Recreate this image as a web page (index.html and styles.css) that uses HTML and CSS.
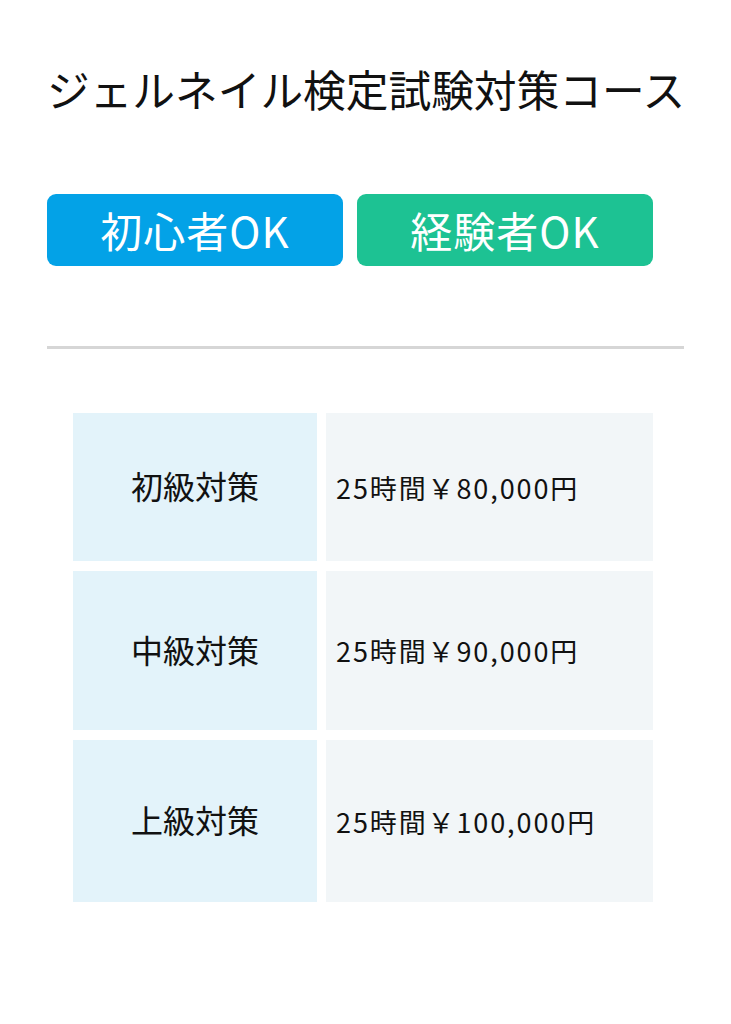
FILE: index.html
```html
<!DOCTYPE html>
<html lang="ja">
<head>
<meta charset="utf-8">
<title>ジェルネイル検定試験対策コース</title>
<link rel="stylesheet" href="styles.css">
</head>
<body>
<main class="page">
  <h1 class="title">ジェルネイル検定試験対策コース</h1>
  <div class="tags">
    <span class="tag tag-blue">初心者OK</span>
    <span class="tag tag-green">経験者OK</span>
  </div>
  <hr class="divider">
  <div class="courses">
    <div class="row row-1">
      <div class="cell label">初級対策</div>
      <div class="cell value">25時間￥80,000円</div>
    </div>
    <div class="row row-2">
      <div class="cell label">中級対策</div>
      <div class="cell value">25時間￥90,000円</div>
    </div>
    <div class="row row-3">
      <div class="cell label">上級対策</div>
      <div class="cell value">25時間￥100,000円</div>
    </div>
  </div>
</main>
</body>
</html>
```

FILE: styles.css
```css
html, body {
  margin: 0;
  padding: 0;
  background: #ffffff;
}
body {
  font-family: "Noto Sans CJK JP", "Noto Sans", sans-serif;
  color: #111111;
}
.page {
  padding: 0 47px;
}
.title {
  margin: 0;
  padding-top: 60px;
  font-size: 42.7px;
  line-height: 56px;
  font-weight: 400;
  letter-spacing: 0;
  white-space: nowrap;
}
.tags {
  display: flex;
  gap: 14px;
  margin-top: 78px;
}
.tag {
  width: 296px;
  height: 72px;
  border-radius: 9px;
  color: #ffffff;
  font-size: 42px;
  letter-spacing: 1px;
  display: flex;
  align-items: center;
  justify-content: center;
  line-height: 1;
}
.tag-blue {
  background: #03a2e7;
}
.tag-green {
  background: #1dc293;
}
.divider {
  margin: 80px 0 0;
  border: 0;
  height: 3px;
  background: #d6d6d6;
}
.courses {
  width: 580px;
  margin: 64px 0 0 26px;
  display: flex;
  flex-direction: column;
  gap: 10px;
}
.row {
  display: flex;
  gap: 9px;
}
.row-1 { height: 148px; }
.row-2 { height: 159px; }
.row-3 { height: 162px; }
.cell {
  display: flex;
  align-items: center;
}
.label {
  width: 244px;
  flex: none;
  background: #e3f3fa;
  justify-content: center;
  font-size: 32px;
  padding-bottom: 4px;
  box-sizing: border-box;
}
.value {
  flex: 1;
  background: #f2f6f8;
  padding-left: 10px;
  font-size: 27px;
  letter-spacing: 1.9px;
}
```
